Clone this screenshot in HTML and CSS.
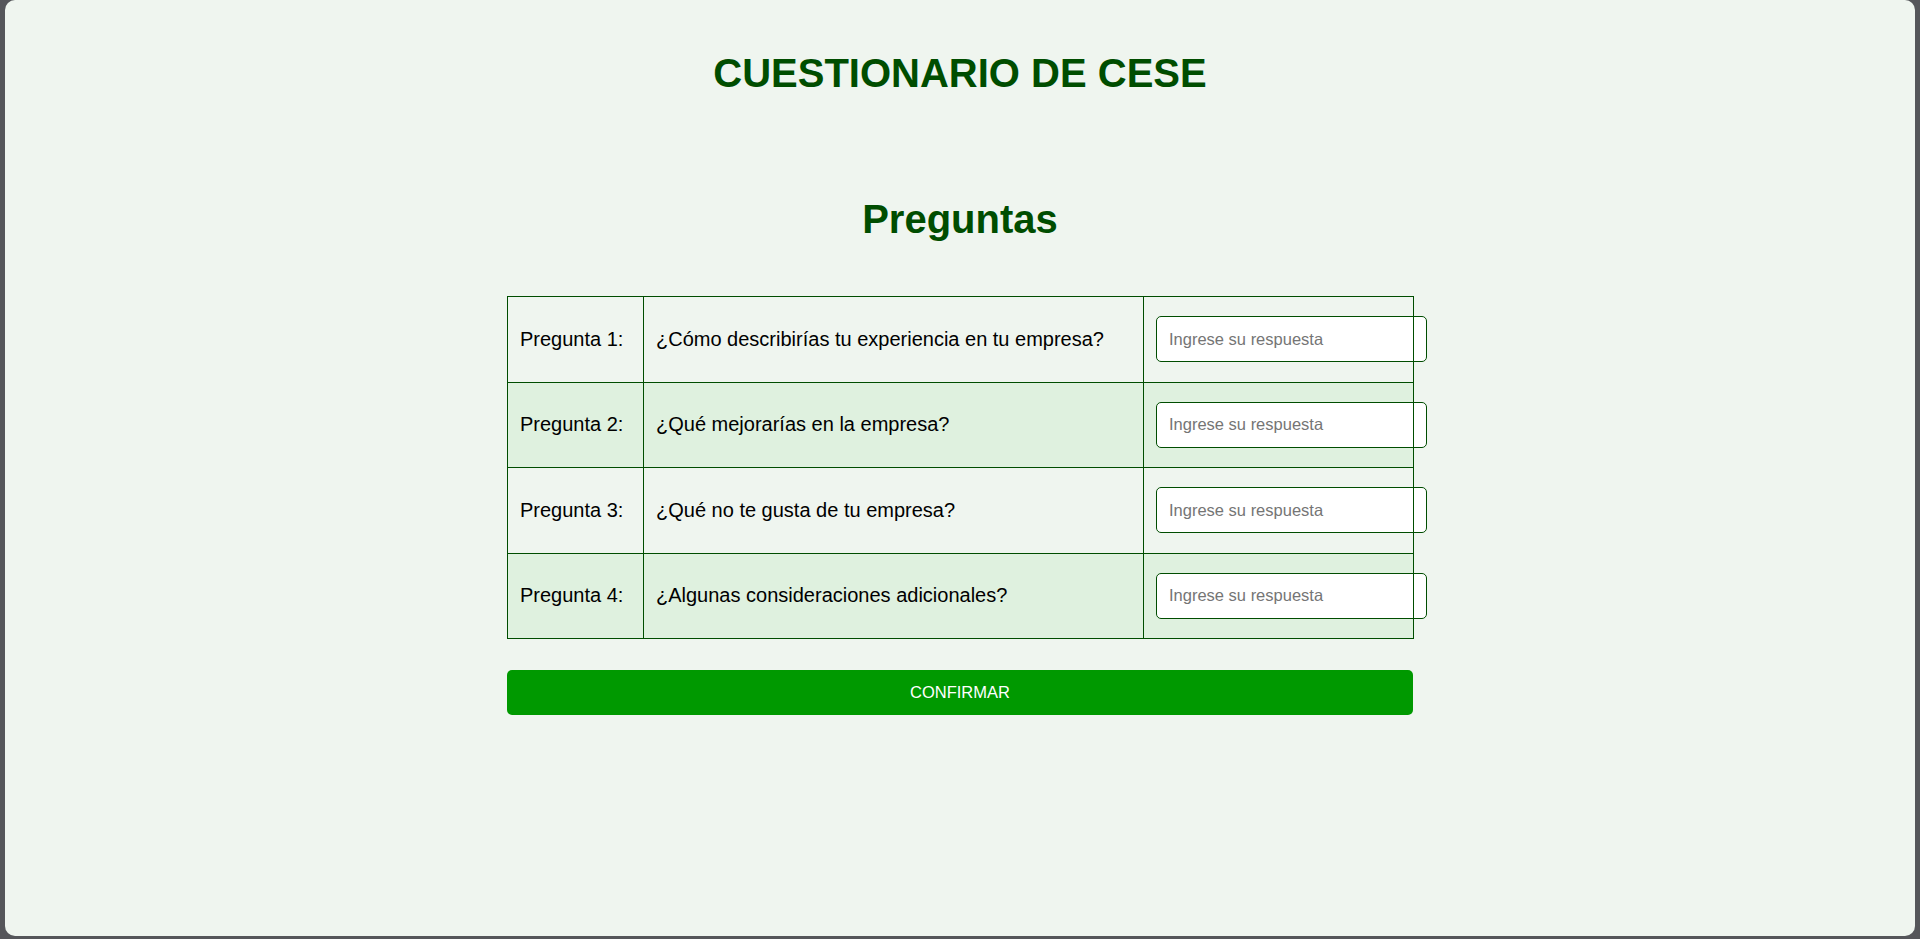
FILE: index.html
```html
<!DOCTYPE html>
<html lang="es">
<head>
<meta charset="utf-8">
<title>Cuestionario de cese</title>
<link rel="stylesheet" href="styles.css">
</head>
<body>
<main class="page">
  <h1 class="title">CUESTIONARIO DE CESE</h1>
  <h2 class="subtitle">Preguntas</h2>
  <form class="quiz">
    <table class="questions">
      <colgroup>
        <col class="col-label">
        <col class="col-question">
        <col class="col-answer">
      </colgroup>
      <tbody>
        <tr>
          <td>Pregunta 1:</td>
          <td>¿Cómo describirías tu experiencia en tu empresa?</td>
          <td><input class="answer" type="text" placeholder="Ingrese su respuesta"></td>
        </tr>
        <tr>
          <td>Pregunta 2:</td>
          <td>¿Qué mejorarías en la empresa?</td>
          <td><input class="answer" type="text" placeholder="Ingrese su respuesta"></td>
        </tr>
        <tr>
          <td>Pregunta 3:</td>
          <td>¿Qué no te gusta de tu empresa?</td>
          <td><input class="answer" type="text" placeholder="Ingrese su respuesta"></td>
        </tr>
        <tr>
          <td>Pregunta 4:</td>
          <td>¿Algunas consideraciones adicionales?</td>
          <td><input class="answer" type="text" placeholder="Ingrese su respuesta"></td>
        </tr>
      </tbody>
    </table>
    <button class="confirm" type="button">CONFIRMAR</button>
  </form>
</main>
</body>
</html>
```

FILE: styles.css
```css
html, body {
  margin: 0;
  padding: 0;
}

body {
  background: #55565a;
  height: 939px;
  overflow: hidden;
  font-family: "Liberation Sans", Arial, sans-serif;
}

.page {
  margin: 0 5px;
  height: 936px;
  background: #eff5ef;
  border-radius: 10px;
  display: flex;
  flex-direction: column;
  align-items: center;
}

.title {
  margin: 51px 0 0;
  font-size: 40px;
  font-weight: bold;
  line-height: normal;
  color: #004d00;
}

.subtitle {
  margin: 101px 0 54px;
  font-size: 40px;
  font-weight: bold;
  line-height: normal;
  color: #004d00;
}

.quiz {
  width: 906px;
  display: flex;
  flex-direction: column;
}

.questions {
  width: 906px;
  border-collapse: collapse;
  table-layout: fixed;
  font-size: 20px;
  color: #000;
}

.col-label { width: 136px; }
.col-question { width: 500px; }
.col-answer { width: 270px; }

.questions td {
  border: 1px solid #004d00;
  padding: 19px 12px 19.5px;
  height: 46px;
  vertical-align: middle;
  white-space: nowrap;
}

.questions tr:nth-child(even) td {
  background: #dff1df;
}

.answer {
  display: block;
  width: 100%;
  height: 20px;
  padding: 12px;
  margin: 0;
  border: 1px solid #004d00;
  border-radius: 5px;
  background: #fff;
  font-family: "Liberation Sans", Arial, sans-serif;
  font-size: 16.5px;
  color: #000;
  outline: none;
}

.answer::placeholder {
  color: #757575;
}

.confirm {
  margin-top: 31px;
  height: 45px;
  width: 100%;
  border: none;
  border-radius: 5px;
  background: #009900;
  color: #fff;
  font-family: "Liberation Sans", Arial, sans-serif;
  font-size: 16.5px;
  cursor: pointer;
}
```
